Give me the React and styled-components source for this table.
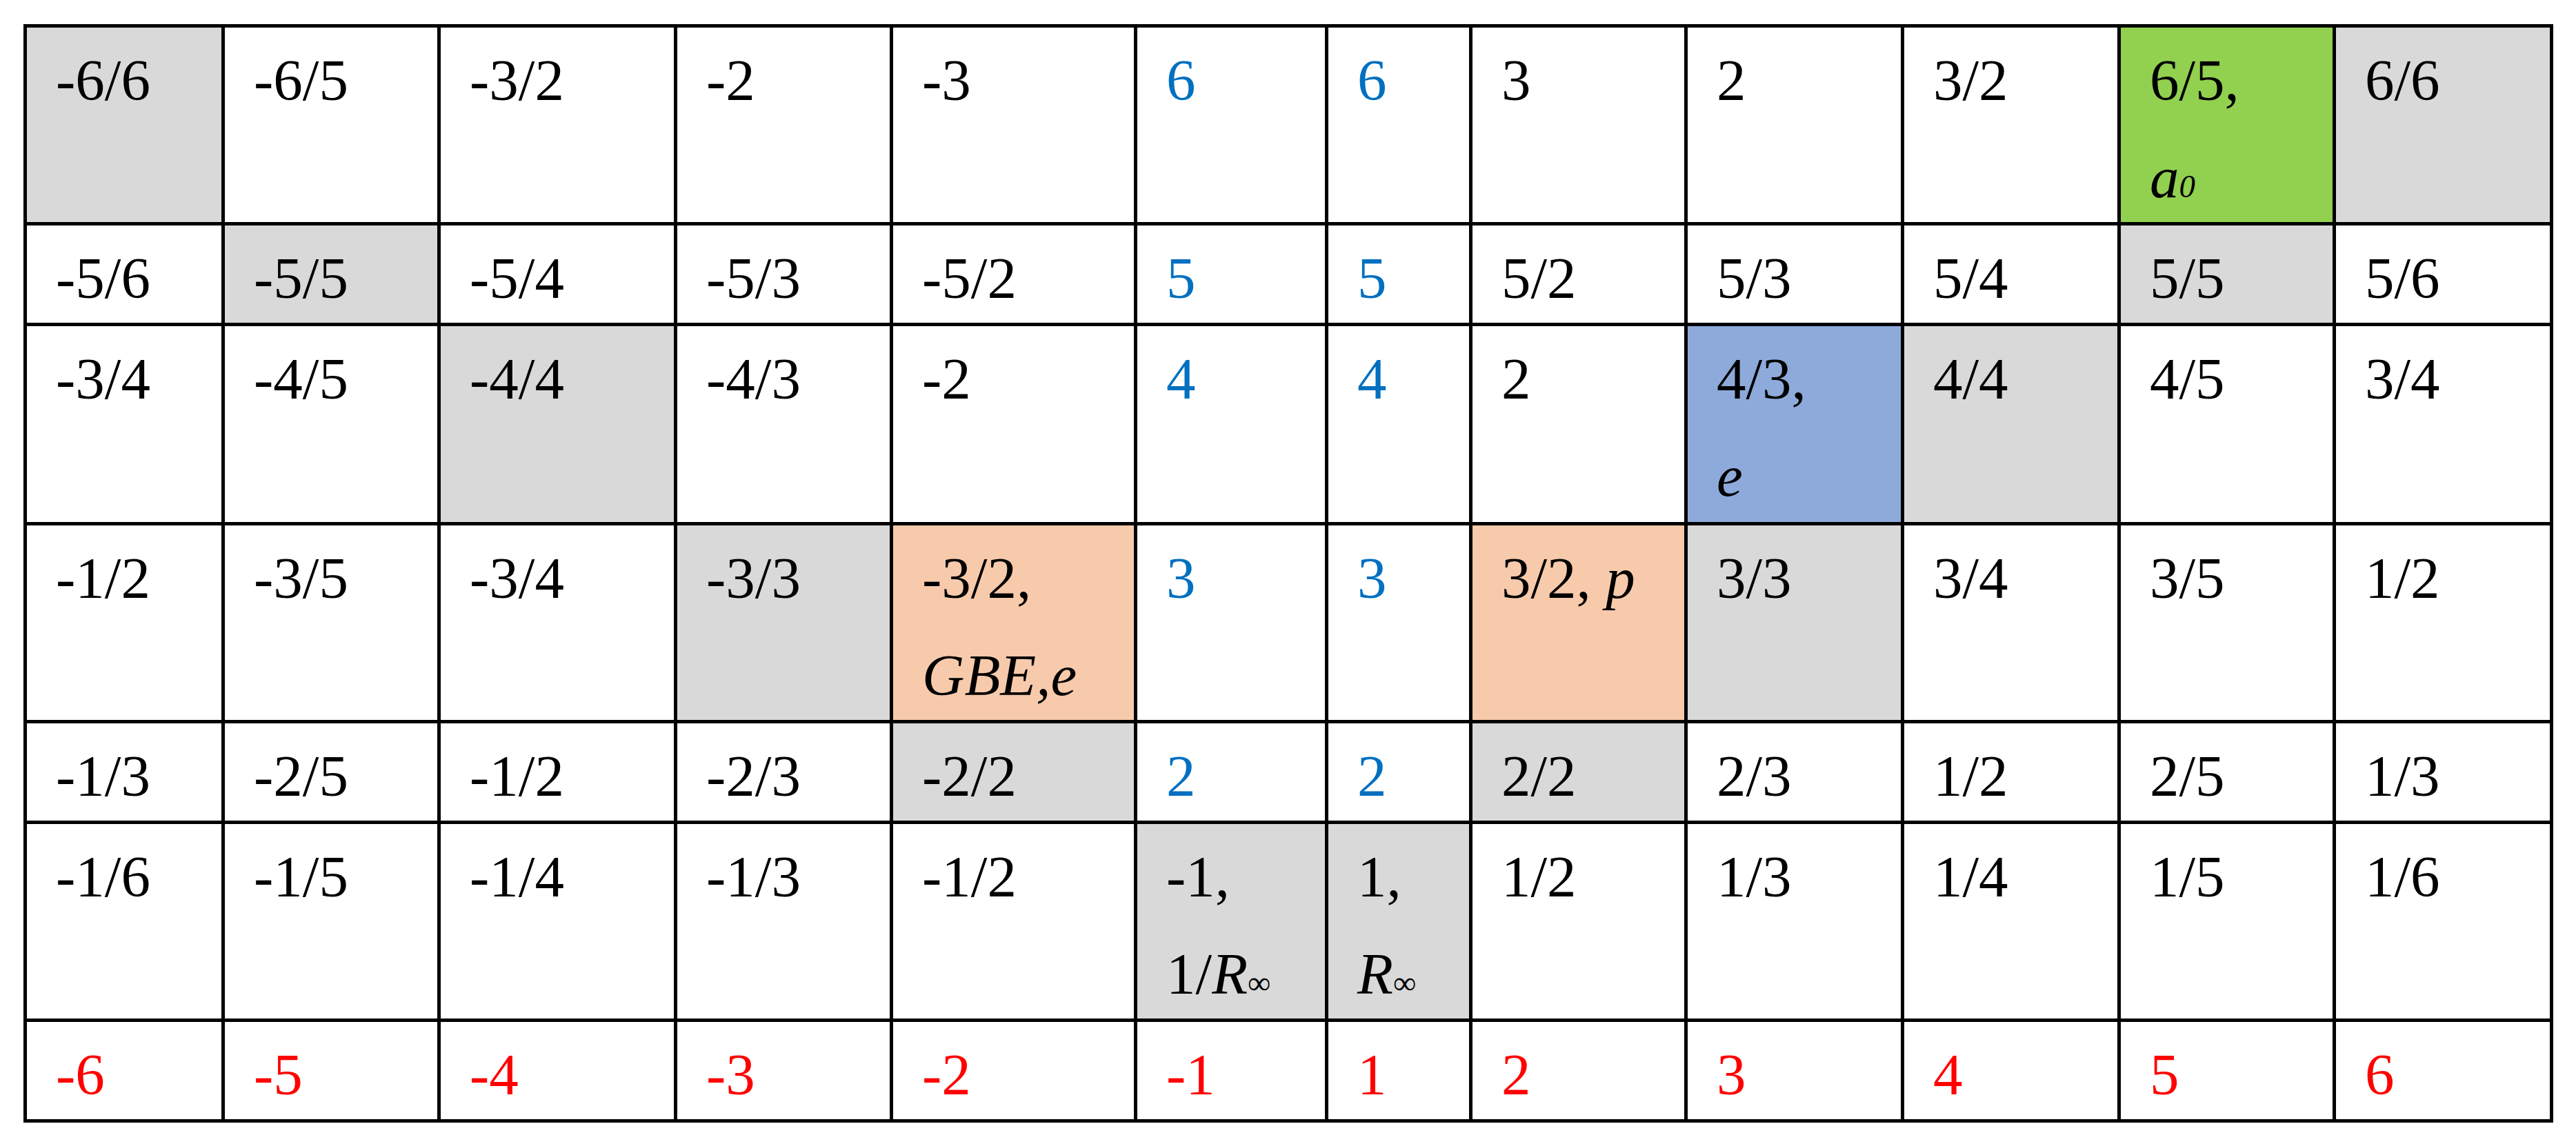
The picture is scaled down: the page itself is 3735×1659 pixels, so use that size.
import React from 'react'
import styled, { createGlobalStyle } from 'styled-components'

const GlobalStyle = createGlobalStyle`
  html, body {
    margin: 0;
    padding: 0;
    background: #ffffff;
  }
`

const BG = {
  grey: '#d9d9d9',
  green: '#92d050',
  blue: '#8eaadb',
  peach: '#f7caac',
}

const INK = {
  blue: '#0070c0',
  red: '#ff0000',
}

const colWidths = [282, 308, 338, 308, 349, 272, 204, 307, 309, 309, 307, 310]
const rowHeights = [282, 141, 284, 282, 141, 282, 141]

const Page = styled.div`
  padding: 35px 0 0 34px;
`

const Grid = styled.div`
  display: inline-grid;
  grid-template-columns: ${colWidths.map((w) => `${w}px`).join(' ')};
  grid-template-rows: ${rowHeights.map((h) => `${h}px`).join(' ')};
  gap: 5px;
  padding: 5px;
  background: #000000;
`

const Cell = styled.div`
  background: ${(p) => (p.$bg ? BG[p.$bg] : '#ffffff')};
  color: ${(p) => (p.$ink ? INK[p.$ink] : '#000000')};
  font-family: 'Liberation Serif', 'Times New Roman', serif;
  font-size: 85px;
  line-height: 141px;
  padding: 6px 0 0 42px;
  white-space: nowrap;
  overflow: hidden;
`

const Var = styled.i`
  font-style: italic;
`

const Sub = styled.span`
  font-size: 0.55em;
  line-height: 0;
`

// each row: [text, background, ink]
const rows = [
  [
    ['-6/6', 'grey'], ['-6/5'], ['-3/2'], ['-2'], ['-3'], ['6', null, 'blue'], ['6', null, 'blue'],
    ['3'], ['2'], ['3/2'],
    [<>6/5,<br /><Var>a<Sub>0</Sub></Var></>, 'green'],
    ['6/6', 'grey'],
  ],
  [
    ['-5/6'], ['-5/5', 'grey'], ['-5/4'], ['-5/3'], ['-5/2'], ['5', null, 'blue'], ['5', null, 'blue'],
    ['5/2'], ['5/3'], ['5/4'], ['5/5', 'grey'], ['5/6'],
  ],
  [
    ['-3/4'], ['-4/5'], ['-4/4', 'grey'], ['-4/3'], ['-2'], ['4', null, 'blue'], ['4', null, 'blue'],
    ['2'], [<>4/3,<br /><Var>e</Var></>, 'blue'], ['4/4', 'grey'], ['4/5'], ['3/4'],
  ],
  [
    ['-1/2'], ['-3/5'], ['-3/4'], ['-3/3', 'grey'],
    [<>-3/2,<br /><Var>GBE,e</Var></>, 'peach'],
    ['3', null, 'blue'], ['3', null, 'blue'],
    [<>3/2, <Var>p</Var></>, 'peach'],
    ['3/3', 'grey'], ['3/4'], ['3/5'], ['1/2'],
  ],
  [
    ['-1/3'], ['-2/5'], ['-1/2'], ['-2/3'], ['-2/2', 'grey'], ['2', null, 'blue'], ['2', null, 'blue'],
    ['2/2', 'grey'], ['2/3'], ['1/2'], ['2/5'], ['1/3'],
  ],
  [
    ['-1/6'], ['-1/5'], ['-1/4'], ['-1/3'], ['-1/2'],
    [<>-1,<br />1/<Var>R</Var><Sub>∞</Sub></>, 'grey'],
    [<>1,<br /><Var>R</Var><Sub>∞</Sub></>, 'grey'],
    ['1/2'], ['1/3'], ['1/4'], ['1/5'], ['1/6'],
  ],
  ['-6', '-5', '-4', '-3', '-2', '-1', '1', '2', '3', '4', '5', '6'].map((t) => [t, null, 'red']),
]

const App = () => {
  return (
    <Page>
      <GlobalStyle />
      <Grid>
        {rows.map((row, r) =>
          row.map(([text, bg, ink], c) => (
            <Cell key={`${r}-${c}`} $bg={bg} $ink={ink}>
              {text}
            </Cell>
          ))
        )}
      </Grid>
    </Page>
  )
}

export default App
